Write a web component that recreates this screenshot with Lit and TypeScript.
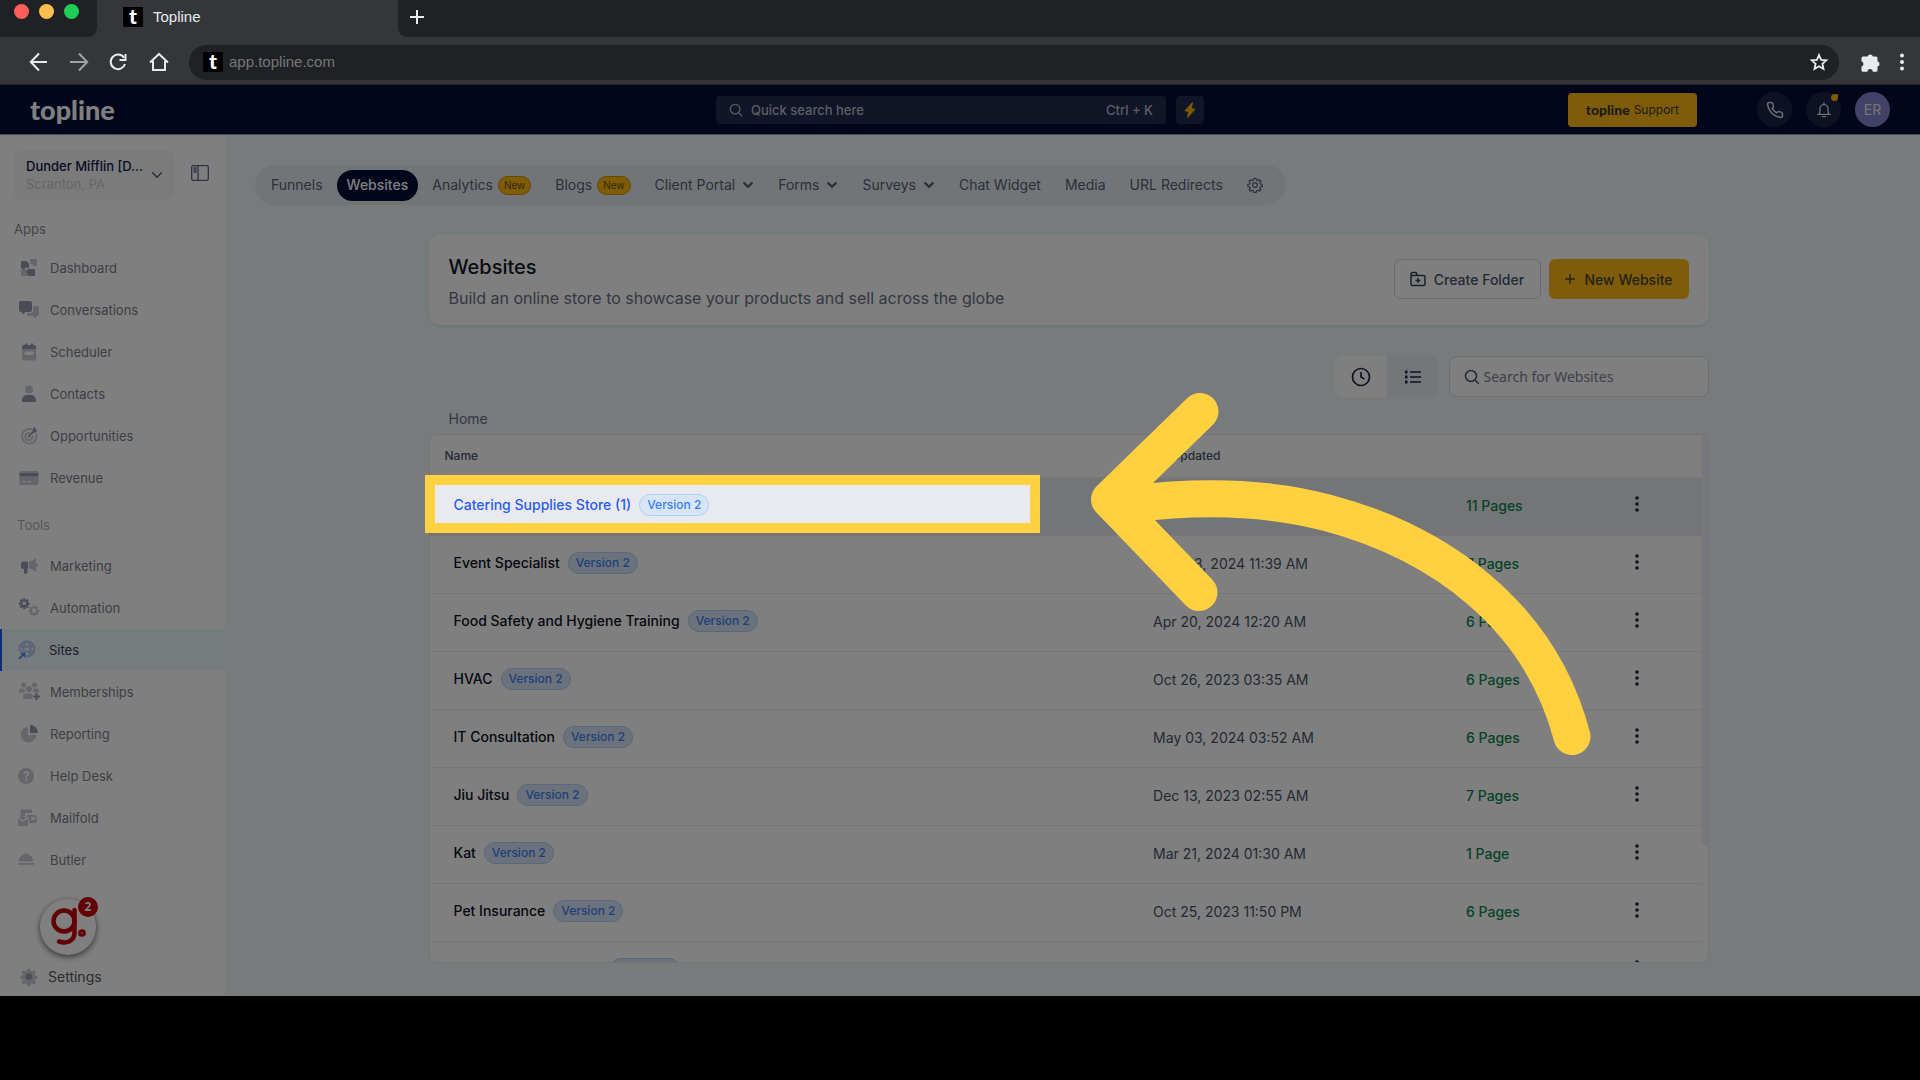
import { LitElement, html, css, svg, nothing } from "lit";
import { customElement } from "lit/decorators.js";
import { classMap } from "lit/directives/class-map.js";

const chevron = (size: number, weight: number) => html`<svg class="ic" width=${size} height=${size} viewBox="0 0 16 16" aria-hidden="true"><path d="M3 5.5 8 10.5 13 5.5" fill="none" stroke="currentColor" stroke-width=${weight} stroke-linecap="round" stroke-linejoin="round"/></svg>`;

const gearPath = "M10.3 2h3.4l.5 2.7 1.9.8 2.3-1.6 2.4 2.4-1.6 2.3.8 1.9 2.7.5v3.4l-2.7.5-.8 1.9 1.6 2.3-2.4 2.4-2.3-1.6-1.9.8-.5 2.7h-3.4l-.5-2.7-1.9-.8-2.3 1.6-2.4-2.4 1.6-2.3-.8-1.9-2.7-.5v-3.4l2.7-.5.8-1.9-1.6-2.3 2.4-2.4 2.3 1.6 1.9-.8z";

const navIcons: Record<string, unknown> = {
  dashboard: svg`<path class="lo" d="M13 2h5a1 1 0 0 1 1 1v5a1 1 0 0 1-1 1h-3V7h-2.500V4.500H12V3a1 1 0 0 1 1-1zM3 13l4-1 3 3v4H4a1 1 0 0 1-1-1z"/><path class="hi" d="M4 4h5l1 2h1v4l-1 2-2-2-2 3-3-2V5a1 1 0 0 1 1-1zM9 13l2-1h5a1 1 0 0 1 1 1v5a1 1 0 0 1-1 1H10v-3H8z"/>`,
  chat: svg`<path class="lo" d="M15 7h4a2 2 0 0 1 2 2v6a2 2 0 0 1-2 2h-1v2.500L14.500 17H11a2 2 0 0 1-2-2v-1h4a2 2 0 0 0 2-2z"/><path class="hi" d="M3 2h9a2 2 0 0 1 2 2v7a2 2 0 0 1-2 2H8l-4 2.500V13H3a2 2 0 0 1-2-2V4a2 2 0 0 1 2-2z"/>`,
  calendar: svg`<path class="lo" d="M4 8h14v10a1.500 1.500 0 0 1-1.500 1.500h-11A1.500 1.500 0 0 1 4 18zm2.500 2.500v3.500h9v-3.500z"/><path class="hi" d="M7 2.500h2V4h4V2.500h2V4h1.500A1.500 1.500 0 0 1 18 5.500V8H4V5.500A1.500 1.500 0 0 1 5.500 4H7z"/>`,
  person: svg`<circle class="lo" cx="11" cy="6.500" r="4"/><path class="hi" d="M4 19v-2a5 5 0 0 1 5-5h4a5 5 0 0 1 5 5v2z"/>`,
  target: svg`<path d="M14 4.500a7.300 7.300 0 1 0 4 4M12 8a3.700 3.700 0 1 0 2.500 2.600" fill="none" stroke="#c9cdd6" stroke-width="1.800"/><circle class="lo" cx="11" cy="11.500" r="1.500"/><path class="hi" d="m15 3 2-1 .500 2.500 2 .500-2 2.500-2 .200-4 4-1.200-1.200 4-4z"/>`,
  card: svg`<path class="lo" d="M1.500 9h19v7.500a1.500 1.500 0 0 1-1.500 1.500H3a1.500 1.500 0 0 1-1.500-1.500zm3 5v1.200h3V14zm4.500 0v1.200h4V14z"/><path class="lo" d="M3 4h16a1.500 1.500 0 0 1 1.500 1.500V6h-19v-.500A1.500 1.500 0 0 1 3 4z"/><path class="hi" d="M1.500 6h19v3.200h-19z"/>`,
  megaphone: svg`<path class="lo" d="M11 6.500c3 0 5-2 7-3.500v5a2 2 0 0 1 0 4v5c-2-1.500-4-3.500-7-3.500z"/><path class="hi" d="M10 6.500V14H9.500v4.500H6V14H5a2 2 0 0 1-2-2V8.500a2 2 0 0 1 2-2z"/>`,
  gears: svg`<g transform="translate(0 0) scale(.52)" class="hi"><path fill-rule="evenodd" d="${gearPath}M12 8.500a3.500 3.500 0 1 0 .01 0z"/></g><g transform="translate(10 7.500) scale(.5)" class="lo"><path fill-rule="evenodd" d="${gearPath}M12 7.500a4.500 4.500 0 1 0 .01 0z"/></g>`,
  globe: svg`<g fill="none" stroke="#b3c8f0" stroke-width="2"><circle cx="10" cy="10" r="7.500"/><ellipse cx="10" cy="10" rx="3.500" ry="7.500"/><path d="M2.500 7.500h15M2.500 12.500h15"/></g><path d="M1 20.500v-1.500l3.500-3.500L2 13h7v7l-2.500-2.500L3 20.500z" fill="#5f8ae8" stroke="#ecf8fb"/>`,
  group: svg`<g class="lo"><circle cx="5.500" cy="4" r="2.500"/><circle cx="16.500" cy="4" r="2.500"/><circle cx="11" cy="8" r="3"/><path d="M1 11.500V10a2.500 2.500 0 0 1 2.500-2.500H6.500l.500 4zM15.500 7.500h3A2.500 2.500 0 0 1 21 10v1.500h-6zM5 18v-2a3.500 3.500 0 0 1 3.500-3.500h5l1 .500v5z"/></g><path class="hi" d="M17.500 12h2v2.500H22v2h-2.500V19h-2v-2.500H15v-2h2.500z"/>`,
  pie: svg`<path class="lo" d="M10 4v8l5.500 5.500A7.700 7.700 0 1 1 10 4z"/><path class="lo" d="m10.500 12 8-.500a7.700 7.700 0 0 1-3 6z"/><path class="hi" d="M12 2a8 8 0 0 1 8 8h-8z"/>`,
  help: svg`<path class="lo" fill-rule="evenodd" d="M8 3a8 8 0 1 0 .01 0zM5.200 8.500A3 3 0 0 1 8.300 6a3 3 0 0 1 3 2.900c0 1.800-1.500 2.200-2.100 2.800v.800H7.300v-1c0-1.600 2-1.700 2-2.600 0-.500-.400-.9-1-.9-.7 0-1 .4-1.100 1zM7.200 13.500h2.200v2.200H7.200z"/>`,
  mail: svg`<path class="lo" fill-rule="evenodd" d="M2.500 2.500H14V6H7v2.500L4 10H2.500zM9 8h8a1.500 1.500 0 0 1 1.500 1.500V16H11v-4L9 10zm4.500 2v3H17v-3z"/><path class="lo" d="M0 11.500 5 15l5-3.500V19H0z"/><path class="lo" d="M1 10h8l-4 3.500z"/>`,
  bell: svg`<path class="lo" d="M7.200 3.500h1.600V5A6.600 6.600 0 0 1 15 12.500H1A6.600 6.600 0 0 1 7.200 5zM0 14h16v1.800H0z"/>`,
  gear: svg`<g transform="translate(1 1) scale(.82)"><path class="lo" d="${gearPath}"/><circle class="hi" cx="12" cy="12" r="4"/></g>`,
};

const navIcon = (name: string) => html`<svg class="ic" width="22" height="22" viewBox="0 0 22 22" aria-hidden="true">${navIcons[name]}</svg>`;

const searchIcon = (size: number) => html`<svg class="ic" width=${size} height=${size} viewBox="0 0 16 16" aria-hidden="true"><circle cx="7" cy="7" r="5.500" fill="none" stroke="currentColor" stroke-width="1.500"/><path d="m11 11 3.500 3.500" stroke="currentColor" stroke-width="1.500" stroke-linecap="round"/></svg>`;

const apps: [string, string][] = [
  ["Dashboard", "dashboard"], ["Conversations", "chat"], ["Scheduler", "calendar"],
  ["Contacts", "person"], ["Opportunities", "target"], ["Revenue", "card"],
];
const tools: [string, string][] = [
  ["Marketing", "megaphone"], ["Automation", "gears"], ["Sites", "globe"], ["Memberships", "group"],
  ["Reporting", "pie"], ["Help Desk", "help"], ["Mailfold", "mail"], ["Butler", "bell"],
];

const tabs: { label: string; isNew?: boolean; menu?: boolean }[] = [
  { label: "Funnels" }, { label: "Websites" }, { label: "Analytics", isNew: true },
  { label: "Blogs", isNew: true }, { label: "Client Portal", menu: true }, { label: "Forms", menu: true },
  { label: "Surveys", menu: true }, { label: "Chat Widget" }, { label: "Media" }, { label: "URL Redirects" },
];

const sites: [string, string, string][] = [
  ["Catering Supplies Store (1)", "", "11 Pages"],
  ["Event Specialist", "May 03, 2024 11:39 AM", "7 Pages"],
  ["Food Safety and Hygiene Training", "Apr 20, 2024 12:20 AM", "6 Pages"],
  ["HVAC", "Oct 26, 2023 03:35 AM", "6 Pages"],
  ["IT Consultation", "May 03, 2024 03:52 AM", "6 Pages"],
  ["Jiu Jitsu", "Dec 13, 2023 02:55 AM", "7 Pages"],
  ["Kat", "Mar 21, 2024 01:30 AM", "1 Page"],
  ["Pet Insurance", "Oct 25, 2023 11:50 PM", "6 Pages"],
  ["Property Maintenance", "", ""],
];

const reset = css`
  * { box-sizing: border-box; }
  a { color: inherit; text-decoration: none; }
  button { font: inherit; color: inherit; border: 0; padding: 0; background: none; display: flex; align-items: center; justify-content: center; }
  input { font: inherit; color: inherit; border: 0; padding: 0; background: none; outline: 0; min-width: 0; flex: 1; }
  .ic { display: block; flex: none; }
`;

@customElement("browser-bar")
export class BrowserBar extends LitElement {
  static styles = [reset, css`
    :host { display: block; font: 15px/20px "Liberation Sans", Arial, sans-serif; color: #e8eaed; background: #35363a; border-bottom: 1px solid #222326; }
    .strip { display: flex; height: 37px; background: #35363a; }
    .lights { width: 97px; background: #202124; border-bottom-right-radius: 9px; display: flex; gap: 10px; padding: 4px 14px; }
    .light { width: 15px; height: 15px; border-radius: 50%; }
    .red { background: #ff5f5a; }
    .amber { background: #ffbe4f; }
    .green { background: #20cb56; }
    .tab { width: 301px; display: flex; align-items: center; gap: 10px; padding: 0 26px 4px; }
    .rest { flex: 1; background: #202124; border-bottom-left-radius: 9px; padding: 0 11px 4px; display: flex; align-items: center; }
    .mark { width: 20px; height: 20px; background: #000; color: #fff; font: 900 21px/17px Lato, sans-serif; text-align: center; flex: none; }
    .tools { display: flex; align-items: center; height: 47px; padding: 3px 8px 0 28px; gap: 18px; }
    .tools .fwd { color: #a0a2a6; }
    .address { flex: 1; height: 35px; border-radius: 18px; background: #202124; display: flex; align-items: center; gap: 6px; padding: 0 10px 0 14px; margin-left: 1px; color: #76777a; }
    .address button { color: #e8eaed; }
    .end { display: flex; align-items: center; gap: 10px; margin-left: 3px; }
  `];
  render() {
    return html`
      <div class="strip">
        <div class="lights"><span class="light red"></span><span class="light amber"></span><span class="light green"></span></div>
        <div class="tab"><span class="mark">t</span><span>Topline</span></div>
        <div class="rest"><button aria-label="New tab"><svg class="ic" width="16" height="16" viewBox="0 0 16 16"><path d="M8 1v14M1 8h14" stroke="currentColor" stroke-width="2"/></svg></button></div>
      </div>
      <div class="tools">
        <button aria-label="Back"><svg class="ic" width="22" height="22" viewBox="0 0 22 22" fill="none" stroke="currentColor" stroke-width="2"><path d="M19 11H3M11 2.500 2.800 11l8.200 8.500"/></svg></button>
        <button class="fwd" aria-label="Forward"><svg class="ic" width="22" height="22" viewBox="0 0 22 22" fill="none" stroke="currentColor" stroke-width="2"><path d="M2 11h16M11 2.500l8.200 8.500-8.200 8.500"/></svg></button>
        <button aria-label="Reload"><svg class="ic" width="22" height="22" viewBox="0 0 22 22" fill="none" stroke="currentColor" stroke-width="2"><path d="M16 6.700A7.300 7.300 0 1 0 17 13M17.500 3v6h-6"/></svg></button>
        <button aria-label="Home"><svg class="ic" width="22" height="22" viewBox="0 0 22 22" fill="none" stroke="currentColor" stroke-width="2"><path d="M2 11.500 11 3l9 8.500M5 10v9h12v-9"/></svg></button>
        <div class="address">
          <span class="mark">t</span>
          <input aria-label="Address" value="app.topline.com">
          <button aria-label="Bookmark"><svg class="ic" width="20" height="20" viewBox="0 0 20 20"><path d="m10 3 2.100 4.800 5.200.500-3.900 3.500 1.100 5.200-4.500-2.700-4.500 2.700 1.100-5.200L2.700 8.300l5.200-.5z" fill="none" stroke="currentColor" stroke-width="1.800"/></svg></button>
        </div>
        <div class="end">
          <button aria-label="Extensions"><svg class="ic" width="22" height="22" viewBox="0 0 22 22"><path d="M1.500 7A1.500 1.500 0 0 1 3 5.500h4.500a2.800 2.800 0 0 1 5.400 0H16A1.500 1.500 0 0 1 17.500 7v3.200a2.800 2.800 0 0 1 0 5.400v3.600A1.500 1.500 0 0 1 16 20.700h-3.300a2.600 2.600 0 0 0-5.200 0H3a1.500 1.500 0 0 1-1.500-1.500v-3.700a2.700 2.700 0 0 0 0-5.200z" fill="currentColor"/></svg></button>
          <button aria-label="Menu"><svg class="ic" width="20" height="20" viewBox="0 0 20 20" fill="currentColor"><circle cx="10" cy="3.500" r="2"/><circle cx="10" cy="10" r="2"/><circle cx="10" cy="16.500" r="2"/></svg></button>
        </div>
      </div>`;
  }
}

@customElement("top-bar")
export class TopBar extends LitElement {
  static styles = [reset, css`
    :host { display: grid; grid-template-columns: 1fr 488px 1fr; align-items: center; height: 50px; padding: 0 30px; background: #020c36; border-bottom: 1px solid #8f96ad; color: #fff; font-size: 13px; line-height: 20px; font-weight: 500; }
    .logo { font: 900 27px/30px Lato, sans-serif; color: #fff; }
    .middle { display: flex; gap: 10px; color: #b9bdca; }
    .search { flex: 1; display: flex; align-items: center; gap: 8px; height: 28px; border-radius: 4px; background: #202a4e; padding: 0 13px; }
    .search input::placeholder { color: #b9bdca; opacity: 1; }
    kbd { font: inherit; }
    .bolt { width: 28px; height: 28px; border-radius: 4px; background: #202a4e; color: #ffb000; }
    .right { display: flex; align-items: center; justify-content: flex-end; gap: 14px; }
    .support { height: 34px; padding: 0 18px; border-radius: 4px; background: #ffb916; color: #3d3820; font-size: 12px; font-weight: 400; gap: 4px; margin-right: 46px; }
    .support b { font: 900 14px/20px Lato, sans-serif; }
    .round { position: relative; width: 35px; height: 35px; border-radius: 50%; background: #1b2348; color: #d9dbe2; }
    .dot { position: absolute; top: 2px; right: 3px; width: 7px; height: 7px; border-radius: 4px 1px 4px 4px; background: #ffb000; }
    .me { background: #8285cc; font-size: 14px; font-weight: 400; color: #e8e8ee; }
  `];
  render() {
    return html`
      <a class="logo" href="#">topline</a>
      <div class="middle">
        <label class="search">${searchIcon(14)}<input placeholder="Quick search here" aria-label="Quick search"><kbd>Ctrl + K</kbd></label>
        <button class="bolt" aria-label="Quick actions"><svg class="ic" width="16" height="16" viewBox="0 0 16 16"><path d="M10.500.5 3 8.800l3.800.6L5.500 15.500 13 7.200l-3.800-.6z" fill="currentColor" stroke="currentColor" stroke-linejoin="round"/></svg></button>
      </div>
      <div class="right">
        <button class="support"><b>topline</b> Support</button>
        <button class="round" aria-label="Phone"><svg class="ic" width="18" height="18" viewBox="0 0 24 24"><path d="M22 16.900v3a2 2 0 0 1-2.200 2 19.800 19.800 0 0 1-8.600-3 19.500 19.500 0 0 1-6-6 19.800 19.800 0 0 1-3.100-8.700A2 2 0 0 1 4.100 2h3a2 2 0 0 1 2 1.700c.1 1 .4 1.900.7 2.800a2 2 0 0 1-.5 2.100L8.100 9.900a16 16 0 0 0 6 6l1.300-1.300a2 2 0 0 1 2.100-.4c.9.300 1.800.6 2.800.7a2 2 0 0 1 1.700 2z" fill="none" stroke="currentColor" stroke-width="2"/></svg></button>
        <button class="round" aria-label="Notifications"><svg class="ic" width="16" height="16" viewBox="0 0 24 24"><path d="M2.500 18.500h19M5 18c1-2 1-4 1-8a6 6 0 0 1 12 0c0 4 0 6 1 8M10 22h4M12 4V1.500" fill="none" stroke="currentColor" stroke-width="2" stroke-linecap="round"/></svg><span class="dot"></span></button>
        <button class="round me">ER</button>
      </div>`;
  }
}

@customElement("side-bar")
export class SideBar extends LitElement {
  static styles = [reset, css`
    :host { display: flex; flex-direction: column; width: 225px; background: #fff; color: #7b808d; font-size: 13px; line-height: 18px; padding: 15px 0 8px; }
    .place { display: flex; align-items: center; gap: 16px; padding: 0 14px; }
    .account { width: 161px; height: 50px; padding: 0 11px 0 12px; border-radius: 8px; background: #f6f6f6; color: #475467; justify-content: space-between; text-align: left; }
    .account strong { display: block; font-weight: 500; color: #101840; }
    .account small { display: block; font-size: 13px; color: #c9cdd3; }
    .collapse { padding-bottom: 4px; }
    h2 { margin: 0; padding: 20px 14px 9px; font: inherit; color: #868a93; }
    .more { padding: 17px 17px 11px; color: #a9adb5; }
    nav { display: flex; flex-direction: column; }
    nav a { display: flex; align-items: center; gap: 10px; height: 42px; padding-left: 18px; }
    .active { background: #ecf8fb; color: #344054; border-left: 2px solid #155eef; padding-left: 15px; }
    .settings { margin-top: auto; display: flex; align-items: center; gap: 8px; padding-left: 18px; color: #535862; font-size: 14px; line-height: 20px; }
    .hi { fill: #959baf; }
    .lo { fill: #c9cdd6; }
    .widget { position: absolute; left: 40px; top: 814px; width: 56px; height: 56px; border-radius: 50%; background: #fff; box-shadow: 0 2px 6px rgba(0, 0, 0, 0.6); }
    .count { position: absolute; left: 38px; top: -2px; width: 20px; height: 20px; border-radius: 50%; background: #c60009; color: #fff; font: 700 12px/20px "Open Sans", sans-serif; text-align: center; }
  `];
  private link([label, icon]: [string, string]) {
    return html`<a href="#" class=${classMap({ active: label === "Sites" })}>${navIcon(icon)}${label}</a>`;
  }
  render() {
    return html`
      <div class="place">
        <button class="account"><span><strong>Dunder Mifflin [D...</strong><small>Scranton, PA</small></span>${chevron(14, 1.5)}</button>
        <button class="collapse" aria-label="Collapse sidebar"><svg class="ic" width="18" height="18" viewBox="0 0 18 18" fill="none" stroke="#5b6380" stroke-width="1.300"><rect x=".7" y="1.700" width="16.600" height="14.600" rx="1.500"/><path d="M7 2v14M2.500 4h3M2.500 6h3M2.500 8h3"/></svg></button>
      </div>
      <h2>Apps</h2>
      <nav>${apps.map((item) => this.link(item))}</nav>
      <h2 class="more">Tools</h2>
      <nav>${tools.map((item) => this.link(item))}</nav>
      <a class="settings" href="#">${navIcon("gear")}Settings</a>
      <button class="widget" aria-label="Guides">
        <svg class="ic" width="38" height="42" viewBox="0 0 38 42" fill="none" stroke="#c60009" stroke-width="4.500" stroke-linecap="round"><circle cx="15" cy="15" r="10.500"/><path d="M25.500 4v23c0 8-8 11-15.500 8.500"/><circle cx="33" cy="27" r="1.600"/></svg>
        <span class="count">2</span>
      </button>`;
  }
}

@customElement("site-list")
export class SiteList extends LitElement {
  static styles = [reset, css`
    :host { display: block; position: relative; height: 49vh; overflow: hidden; background: #fff; border: 1px solid #e6e8ee; border-radius: 8px; padding-right: 6px; font-size: 14px; line-height: 20px; color: #475467; }
    .thumb { position: absolute; right: 0; top: 0; width: 6px; height: 78%; border-radius: 3px; background: #eeeefc; }
    table { width: 100%; border-collapse: collapse; table-layout: fixed; }
    .c1 { width: 55%; }
    .c2 { width: 24.6%; }
    .c3 { width: 12.8%; }
    th { height: 42px; padding: 0 15px; text-align: left; font-size: 12px; font-weight: 500; color: #475467; border-bottom: 1px solid #eff0f3; }
    td { height: 58px; padding: 0 24px; border-bottom: 1px solid #ededf1; }
    .hover td { background: #e9eaef; }
    .name { display: flex; align-items: center; gap: 8px; padding-bottom: 2px; font-weight: 500; color: #0c111d; }
    .hover .name { color: #2a5bff; }
    .tag { height: 22px; padding: 0 7px; border: 1px solid #b0cff6; border-radius: 11px; background: #d8e5f7; font-size: 12px; line-height: 20px; color: #3b7ff5; }
    .pages { color: #0b8551; font-weight: 500; }
    td button { color: #1d2939; padding-bottom: 4px; }
  `];
  render() {
    return html`
      <table>
        <colgroup><col class="c1"><col class="c2"><col class="c3"><col></colgroup>
        <thead><tr><th>Name</th><th>Last Updated</th><th></th><th></th></tr></thead>
        <tbody>
          ${sites.map(([name, date, pages], i) => html`
            <tr class=${classMap({ hover: i === 0 })}>
              <td><a class="name" href="#">${name}<span class="tag">Version 2</span></a></td>
              <td>${date || nothing}</td>
              <td><a class="pages" href="#">${pages}</a></td>
              <td><button aria-label="Options"><svg class="ic" width="16" height="18" viewBox="0 0 16 18" fill="currentColor"><circle cx="8" cy="3" r="1.800"/><circle cx="8" cy="9" r="1.800"/><circle cx="8" cy="15" r="1.800"/></svg></button></td>
            </tr>`)}
        </tbody>
      </table>
      <span class="thumb"></span>`;
  }
}

@customElement("app-root")
export class AppRoot extends LitElement {
  static styles = [reset, css`
    :host { display: block; min-height: 100vh; background: #000; font-family: Inter, "Noto Sans", sans-serif; overflow: hidden; }
    .app { position: relative; overflow: hidden; background: #eef7f9; }
    .body { display: flex; }
    main { flex: 1; min-width: 0; padding: 30px 8px 33px 0; }
    .tabs { display: inline-flex; align-items: center; gap: 4px; height: 40px; margin-left: 30px; padding: 0 13px 0 6px; border-radius: 20px; background: #e4ebf0; color: #596070; font-size: 14px; }
    .tab { display: flex; align-items: center; gap: 5px; height: 31px; padding: 0 10px; border-radius: 16px; line-height: 20px; }
    .menu { gap: 7px; }
    .current { background: #020c36; color: #fff; font-weight: 500; }
    .new { height: 19px; padding: 0 5px; border: 1px solid #d09000; border-radius: 10px; background: #ffb90f; color: #6b5310; font-size: 10px; line-height: 17px; }
    .wrap { max-width: 1280px; margin: 30px auto 0; }
    .card { display: flex; align-items: center; gap: 8px; height: 90px; padding: 0 20px 2px; border-radius: 10px; background: #fff; box-shadow: 0 1px 3px rgba(16, 24, 40, 0.1); }
    .intro { flex: 1; padding-top: 6px; }
    h1 { margin: 0; font-size: 20px; line-height: 32px; font-weight: 500; color: #101828; }
    p { margin: 0; font-size: 16px; line-height: 30px; color: #667085; }
    .card button { height: 40px; border-radius: 6px; gap: 8px; font-size: 14px; font-weight: 500; }
    .folder { width: 147px; border: 1px solid #d0d5dd; color: #475467; }
    .card .create { width: 140px; background: #ffb916; color: #4d4320; }
    .filters { display: flex; justify-content: flex-end; margin-top: 31px; height: 41px; color: #1d2546; }
    .filters button { width: 52px; background: #fff; border-radius: 8px 0 0 8px; }
    .filters .alt { background: #e8eef2; border-radius: 0 8px 8px 0; }
    .find { display: flex; align-items: center; gap: 4px; width: 260px; margin-left: 10px; padding: 0 14px; border: 1px solid #d8dbe2; border-radius: 8px; background: #fff; font: 14px/20px "Noto Sans", sans-serif; color: #475467; }
    .find input::placeholder { color: #7a8192; opacity: 1; }
    .crumb { display: block; padding: 12px 20px 5px; font-size: 14px; line-height: 20px; color: #667085; }
    .spot { position: absolute; left: 425px; top: 390px; width: 615px; height: 58px; border: 10px solid #ffd141; box-shadow: 0 0 0 9999px rgba(0, 0, 0, 0.5); pointer-events: none; }
    .arrow { position: absolute; left: 1080px; top: 295px; pointer-events: none; }
  `];
  render() {
    return html`
      <browser-bar></browser-bar>
      <div class="app">
        <top-bar></top-bar>
        <div class="body">
          <side-bar></side-bar>
          <main>
            <nav class="tabs">
              ${tabs.map((t) => html`<a href="#" class=${classMap({ tab: true, menu: !!t.menu, current: t.label === "Websites" })}>${t.label}${t.isNew ? html`<span class="new">New</span>` : nothing}${t.menu ? chevron(12, 3) : nothing}</a>`)}
              <a href="#" class="tab" aria-label="Settings"><svg class="ic" width="16" height="16" viewBox="0 0 24 24" fill="none" stroke="currentColor" stroke-width="1.800"><path d=${gearPath} stroke-linejoin="round"/><circle cx="12" cy="12" r="3.500"/></svg></a>
            </nav>
            <div class="wrap">
              <section class="card">
                <div class="intro"><h1>Websites</h1><p>Build an online store to showcase your products and sell across the globe</p></div>
                <button class="folder"><svg class="ic" width="16" height="16" viewBox="0 0 16 16" fill="none" stroke="#344054" stroke-width="1.500"><path d="M1 4.500V3a1.500 1.500 0 0 1 1.500-1.500H6L7.500 4.500h6A1.500 1.500 0 0 1 15 6v7a1.500 1.500 0 0 1-1.500 1.500h-11A1.500 1.500 0 0 1 1 13zh6.500M8 7v5M5.500 9.500h5"/></svg>Create Folder</button>
                <button class="create"><svg class="ic" width="12" height="12" viewBox="0 0 12 12"><path d="M6 1v10M1 6h10" stroke="currentColor" stroke-width="1.300"/></svg>New Website</button>
              </section>
              <div class="filters">
                <button aria-label="Recent"><svg class="ic" width="20" height="20" viewBox="0 0 20 20" fill="none" stroke="currentColor" stroke-width="1.700"><circle cx="10" cy="10" r="8.500"/><path d="M10 5v5l3.500 2"/></svg></button>
                <button class="alt" aria-label="List"><svg class="ic" width="18" height="16" viewBox="0 0 18 16" stroke="currentColor" stroke-width="1.700"><path d="M6 3h11M6 8h11M6 13h11"/><path d="M1 3h2.500M1 8h2.500M1 13h2.500" stroke-width="2.800"/></svg></button>
                <label class="find">${searchIcon(16)}<input placeholder="Search for Websites" aria-label="Search for Websites"></label>
              </div>
              <a class="crumb" href="#">Home</a>
              <site-list></site-list>
            </div>
          </main>
        </div>
        <div class="spot"></div>
        <svg class="arrow" width="520" height="390" viewBox="1080 380 520 390" aria-hidden="true" fill="none" stroke="#ffd141" stroke-width="37" stroke-linecap="round" stroke-linejoin="round">
          <path d="M1200 411.500 1109.500 499.500 1199 592.500"/>
          <path d="M1130 504C1195 496 1265 496 1328 513C1440 543 1540 615 1572 736.500"/>
        </svg>
      </div>`;
  }
}
